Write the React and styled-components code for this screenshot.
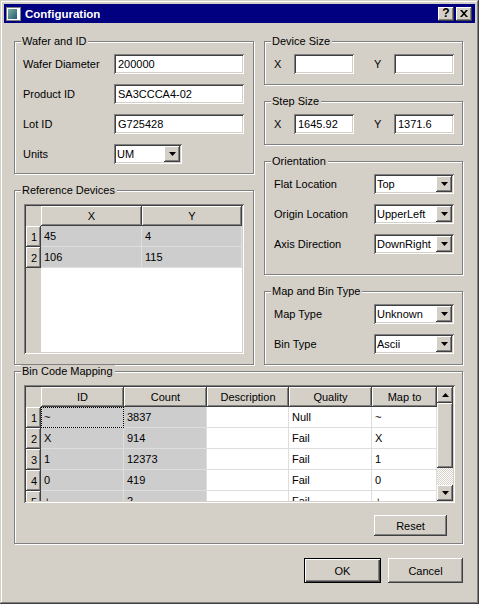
import React from "react";
import styled, { createGlobalStyle, css } from "styled-components";

const GlobalStyle = createGlobalStyle`
  html, body { margin: 0; padding: 0; background: #d4d0c8; }
  body {
    font-family: "Liberation Sans", Arial, sans-serif;
    font-size: 11px;
    color: #000;
  }
  * { box-sizing: border-box; }
`;

const raised = css`
  background: #d4d0c8;
  box-shadow: inset -1px -1px 0 #404040, inset 1px 1px 0 #fff,
    inset -2px -2px 0 #808080;
`;

const sunken = css`
  background: #fff;
  box-shadow: inset 1px 1px 0 #808080, inset -1px -1px 0 #fff,
    inset 2px 2px 0 #404040, inset -2px -2px 0 #d4d0c8;
`;

const Window = styled.div`
  width: 479px;
  height: 604px;
  padding: 4px;
  display: flex;
  flex-direction: column;
  background: #d4d0c8;
  box-shadow: inset -1px -1px 0 #404040, inset 1px 1px 0 #d4d0c8,
    inset -2px -2px 0 #808080, inset 2px 2px 0 #fff;
`;

const TitleBar = styled.div`
  height: 19px;
  background: #000080;
  display: flex;
  align-items: center;
  padding: 0 3px 0 2px;
`;

const TitleText = styled.span`
  margin-left: 3px;
  color: #fff;
  font-weight: bold;
  font-size: 11.5px;
`;

const TitleButtons = styled.div`
  margin-left: auto;
  display: flex;
  gap: 2px;
`;

const TitleButton = styled.div`
  ${raised};
  width: 16px;
  height: 14px;
  display: flex;
  align-items: center;
  justify-content: center;
  font-weight: bold;
  font-size: 12px;
  line-height: 1;
  padding-bottom: 1px;
`;

const Client = styled.div`
  flex: 1;
  display: flex;
  flex-direction: column;
  padding: 18px 12px 17px 10px;
`;

const TopGrid = styled.div`
  display: grid;
  grid-template-columns: 240px 199px;
  column-gap: 10px;
`;

const Column = styled.div`
  display: flex;
  flex-direction: column;
  gap: 16px;
`;

const Group = styled.div`
  position: relative;
  height: ${(p) => p.$h}px;
  border: 1px solid #808080;
  box-shadow: inset 1px 1px 0 #fff, 1px 1px 0 #fff;
  padding: ${(p) => p.$pad || "12px 9px 0 9px"};
  display: flex;
  flex-direction: column;
`;

const GroupTitle = styled.span`
  position: absolute;
  top: -7px;
  left: 6px;
  padding: 0 2px 0 1px;
  line-height: 13px;
  background: #d4d0c8;
`;

const FieldGrid = styled.div`
  display: grid;
  grid-template-columns: ${(p) => p.$label}px auto;
  grid-auto-rows: 20px;
  row-gap: 10px;
  align-items: center;
`;

const Label = styled.span`
  white-space: nowrap;
`;

const TextBox = styled.div`
  ${sunken};
  width: ${(p) => p.$w}px;
  height: 20px;
  padding: 0 4px;
  display: flex;
  align-items: center;
`;

const Combo = styled.div`
  ${sunken};
  width: ${(p) => p.$w}px;
  height: 20px;
  padding: 2px;
  display: flex;
  align-items: center;
`;

const ComboText = styled.span`
  flex: 1;
  padding-left: 1px;
`;

const DropButton = styled.div`
  ${raised};
  width: 16px;
  height: 16px;
  display: flex;
  align-items: center;
  justify-content: center;
`;

const AxisRow = styled.div`
  display: flex;
  align-items: center;
`;

const AxisPair = styled.div`
  display: flex;
  align-items: center;
  & + & {
    margin-left: 20px;
  }
`;

const AxisLabel = styled.span`
  width: 20px;
`;

const TableFrame = styled.div`
  ${sunken};
  width: ${(p) => p.$w}px;
  height: ${(p) => p.$h}px;
  padding: 2px;
  display: flex;
  overflow: hidden;
`;

const Grid = styled.div`
  flex: 1;
  display: grid;
  grid-template-columns: ${(p) => p.$cols};
  grid-template-rows: 20px;
  grid-auto-rows: 21px;
  align-content: start;
  background: linear-gradient(to right, #d4d0c8 15px, #fff 15px);
  overflow: hidden;
`;

const Corner = styled.div`
  background: #d4d0c8;
`;

const HeadCell = styled.div`
  ${raised};
  display: flex;
  align-items: center;
  justify-content: center;
`;

const RowHead = styled(HeadCell)`
  padding-left: 1px;
`;

const Cell = styled.div`
  background: ${(p) => (p.$sel ? "#cdcdcd" : "#fff")};
  border-right: 1px solid #dedede;
  border-bottom: 1px solid #dedede;
  padding-left: 3px;
  display: flex;
  align-items: center;
  ${(p) =>
    p.$focus &&
    css`
      outline: 1px dotted #000;
      outline-offset: -1px;
    `}
`;

const ScrollBar = styled.div`
  width: 16px;
  display: flex;
  flex-direction: column;
`;

const ScrollButton = styled.div`
  ${raised};
  height: 16px;
  flex: 0 0 16px;
  display: flex;
  align-items: center;
  justify-content: center;
`;

const Thumb = styled.div`
  ${raised};
  flex: 0 0 65px;
`;

const Track = styled.div`
  flex: 1;
  background: repeating-conic-gradient(#d4d0c8 0 25%, #fff 0 50%) 0 0 / 2px 2px;
`;

const Button = styled.button`
  ${raised};
  border: none;
  font: inherit;
  color: #000;
  width: ${(p) => p.$w}px;
  height: ${(p) => p.$h || 23}px;
  padding: 0;
  ${(p) =>
    p.$default &&
    css`
      box-shadow: inset 0 0 0 1px #000, inset 2px 2px 0 #fff,
        inset -2px -2px 0 #404040, inset -3px -3px 0 #808080;
    `}
`;

const ResetRow = styled.div`
  display: flex;
  justify-content: flex-end;
  margin-top: 12px;
  padding-right: 7px;
`;

const DialogButtons = styled.div`
  display: flex;
  justify-content: flex-end;
  gap: 7px;
  margin-top: 14px;
`;

const Arrow = ({ dir = "down" }) => (
  <svg width="7" height="4" viewBox="0 0 7 4">
    <polygon
      points={dir === "down" ? "0,0 7,0 3.5,4" : "0,4 7,4 3.5,0"}
      fill="#000"
    />
  </svg>
);

const Select = ({ w, value }) => (
  <Combo $w={w}>
    <ComboText>{value}</ComboText>
    <DropButton>
      <Arrow />
    </DropButton>
  </Combo>
);

const AppIcon = () => (
  <svg width="16" height="16" viewBox="0 0 16 16">
    <rect x="0.5" y="1.5" width="14" height="13" fill="#fff" stroke="#808080" />
    <defs>
      <linearGradient id="ic" x1="0" y1="0" x2="1" y2="1">
        <stop offset="0" stopColor="#7fb0a0" />
        <stop offset="1" stopColor="#245a78" />
      </linearGradient>
    </defs>
    <rect x="2" y="3" width="9" height="10" fill="url(#ic)" />
    <rect x="12" y="3" width="2" height="5" fill="#fff" />
  </svg>
);

const CloseGlyph = () => (
  <svg width="8" height="7" viewBox="0 0 8 7">
    <path d="M0 0h2l2 2.3L6 0h2L5 3.5 8 7H6L4 4.7 2 7H0l3-3.5z" fill="#000" />
  </svg>
);

const refRows = [
  ["45", "4"],
  ["106", "115"],
];

const binRows = [
  ["~", "3837", "", "Null", "~"],
  ["X", "914", "", "Fail", "X"],
  ["1", "12373", "", "Fail", "1"],
  ["0", "419", "", "Fail", "0"],
  ["+", "2", "", "Fail", "+"],
];

const binHeads = ["ID", "Count", "Description", "Quality", "Map to"];

export default function App() {
  return (
    <>
      <GlobalStyle />
      <Window>
        <TitleBar>
          <AppIcon />
          <TitleText>Configuration</TitleText>
          <TitleButtons>
            <TitleButton>?</TitleButton>
            <TitleButton>
              <CloseGlyph />
            </TitleButton>
          </TitleButtons>
        </TitleBar>

        <Client>
          <TopGrid>
            <Column>
              <Group $h={133} $pad="12px 9px 0 8px">
                <GroupTitle>Wafer and ID</GroupTitle>
                <FieldGrid $label={91}>
                  <Label>Wafer Diameter</Label>
                  <TextBox $w={130}>200000</TextBox>
                  <Label>Product ID</Label>
                  <TextBox $w={130}>SA3CCCA4-02</TextBox>
                  <Label>Lot ID</Label>
                  <TextBox $w={130}>G725428</TextBox>
                  <Label>Units</Label>
                  <Select w={68} value="UM" />
                </FieldGrid>
              </Group>

              <Group $h={175} $pad="13px 9px 0 9px">
                <GroupTitle>Reference Devices</GroupTitle>
                <TableFrame $w={220} $h={150}>
                  <Grid $cols="15px 101px 100px">
                    <Corner />
                    <HeadCell>X</HeadCell>
                    <HeadCell>Y</HeadCell>
                    {refRows.map((row, i) => (
                      <React.Fragment key={i}>
                        <RowHead>{i + 1}</RowHead>
                        {row.map((v, j) => (
                          <Cell key={j} $sel>
                            {v}
                          </Cell>
                        ))}
                      </React.Fragment>
                    ))}
                  </Grid>
                </TableFrame>
              </Group>
            </Column>

            <Column>
              <Group $h={44}>
                <GroupTitle>Device Size</GroupTitle>
                <AxisRow>
                  <AxisPair>
                    <AxisLabel>X</AxisLabel>
                    <TextBox $w={60} />
                  </AxisPair>
                  <AxisPair>
                    <AxisLabel>Y</AxisLabel>
                    <TextBox $w={60} />
                  </AxisPair>
                </AxisRow>
              </Group>

              <Group $h={44}>
                <GroupTitle>Step Size</GroupTitle>
                <AxisRow>
                  <AxisPair>
                    <AxisLabel>X</AxisLabel>
                    <TextBox $w={60}>1645.92</TextBox>
                  </AxisPair>
                  <AxisPair>
                    <AxisLabel>Y</AxisLabel>
                    <TextBox $w={60}>1371.6</TextBox>
                  </AxisPair>
                </AxisRow>
              </Group>

              <Group $h={114}>
                <GroupTitle>Orientation</GroupTitle>
                <FieldGrid $label={100}>
                  <Label>Flat Location</Label>
                  <Select w={80} value="Top" />
                  <Label>Origin Location</Label>
                  <Select w={80} value="UpperLeft" />
                  <Label>Axis Direction</Label>
                  <Select w={80} value="DownRight" />
                </FieldGrid>
              </Group>

              <Group $h={74}>
                <GroupTitle>Map and Bin Type</GroupTitle>
                <FieldGrid $label={100}>
                  <Label>Map Type</Label>
                  <Select w={80} value="Unknown" />
                  <Label>Bin Type</Label>
                  <Select w={80} value="Ascii" />
                </FieldGrid>
              </Group>
            </Column>
          </TopGrid>

          <Group $h={173} $pad="13px 8px 0 9px" style={{ marginTop: 6 }}>
            <GroupTitle>Bin Code Mapping</GroupTitle>
            <TableFrame $w={431} $h={118}>
              <Grid $cols="15px 83px 83px 82px 83px 65px">
                <Corner />
                {binHeads.map((h) => (
                  <HeadCell key={h}>{h}</HeadCell>
                ))}
                {binRows.map((row, i) => (
                  <React.Fragment key={i}>
                    <RowHead>{i + 1}</RowHead>
                    {row.map((v, j) => (
                      <Cell key={j} $sel={j < 2} $focus={i === 0 && j === 0}>
                        {v}
                      </Cell>
                    ))}
                  </React.Fragment>
                ))}
              </Grid>
              <ScrollBar>
                <ScrollButton>
                  <Arrow dir="up" />
                </ScrollButton>
                <Thumb />
                <Track />
                <ScrollButton>
                  <Arrow />
                </ScrollButton>
              </ScrollBar>
            </TableFrame>
            <ResetRow>
              <Button $w={73} $h={21}>
                Reset
              </Button>
            </ResetRow>
          </Group>

          <DialogButtons>
            <Button $w={77} $h={25} $default>
              OK
            </Button>
            <Button $w={75} $h={25}>
              Cancel
            </Button>
          </DialogButtons>
        </Client>
      </Window>
    </>
  );
}
